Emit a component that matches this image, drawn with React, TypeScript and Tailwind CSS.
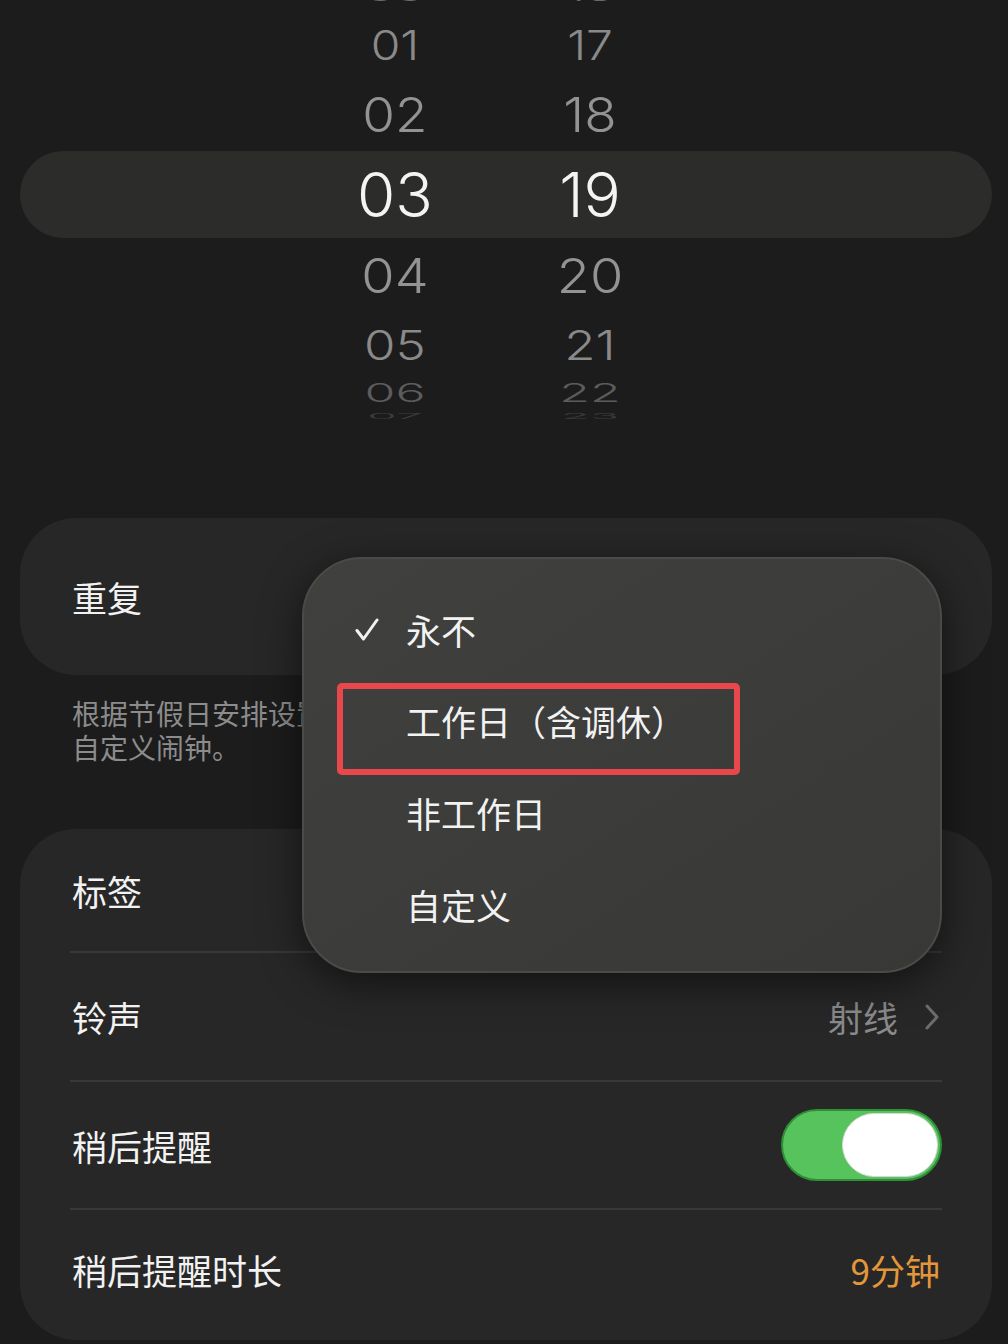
import React from "react";

const cjk = { fontFamily: '"Noto Sans CJK SC", "Noto Sans", sans-serif' };
const digitFont = { fontFamily: 'Inter, "Liberation Sans", sans-serif' };

type Row = { a: string; b: string; h: string; size: string; sy: string; color: string };

const rows: Row[] = [
  { a: "00", b: "16", h: "h-[30px]", size: "text-[48px]", sy: "scale-y-[0.35]", color: "text-[#6a6a6a]" },
  { a: "01", b: "17", h: "h-[70px]", size: "text-[48px]", sy: "scale-y-[0.86]", color: "text-[#8a8a8a]" },
  { a: "02", b: "18", h: "h-[71px]", size: "text-[53px]", sy: "scale-y-[0.91]", color: "text-[#939393]" },
];
const rowsBelow: Row[] = [
  { a: "04", b: "20", h: "h-[76px]", size: "text-[54px]", sy: "scale-y-[0.89]", color: "text-[#939393]" },
  { a: "05", b: "21", h: "h-[62px]", size: "text-[51px]", sy: "scale-y-[0.81]", color: "text-[#8a8a8a]" },
  { a: "06", b: "22", h: "h-[34px]", size: "text-[50px]", sy: "scale-y-[0.5]", color: "text-[#5c5c5c]" },
  { a: "07", b: "23", h: "h-[12px]", size: "text-[48px]", sy: "scale-y-[0.15]", color: "text-[#3c3c3c]" },
];

function PickerRow({ r }: { r: Row }) {
  return (
    <div className={`flex items-center pl-[295px] ${r.h}`}>
      <div className={`w-[200px] text-center font-light leading-none ${r.size} ${r.color} ${r.sy}`} style={digitFont}>
        {r.a}
      </div>
      <div className={`w-[190px] text-center font-light leading-none ${r.size} ${r.color} ${r.sy}`} style={digitFont}>
        {r.b}
      </div>
    </div>
  );
}

function Sep() {
  return <div className="mx-[50px] h-[2px] bg-[#383838]" />;
}

export default function App() {
  return (
    <div className="w-[1008px] h-[1344px] overflow-hidden bg-[#1c1c1c] text-[#f2f2f2]" style={cjk}>
      {/* Time picker */}
      <div className="mt-[-20px]">
        {rows.map((r) => (
          <PickerRow key={r.a} r={r} />
        ))}
        <div className="ml-[20px] mr-[16px] flex h-[87px] items-center rounded-full bg-[#2c2d2a] pl-[275px]">
          <div className="w-[200px] text-center text-[62px] font-light leading-none text-[#f4f4f4]" style={digitFont}>
            03
          </div>
          <div className="w-[190px] text-center text-[62px] font-light leading-none text-[#f4f4f4]" style={digitFont}>
            19
          </div>
        </div>
        {rowsBelow.map((r) => (
          <PickerRow key={r.a} r={r} />
        ))}
      </div>

      {/* Settings */}
      <div className="relative mt-[96px]">
        <div className="ml-[20px] mr-[16px] flex h-[157px] items-center rounded-[56px] bg-[#272727] pl-[52px]">
          <span className="text-[35px] leading-none">重复</span>
        </div>
        <div className="mt-[21px] pl-[72px] pr-[60px] text-[28px] leading-[34px] text-[#8c8c8c]">
          <p className="whitespace-nowrap">根据节假日安排设置闹钟，节假日不响铃，或选择</p>
          <p>自定义闹钟。</p>
        </div>

        <div className="ml-[20px] mr-[16px] mt-[65px] h-[511px] rounded-[56px] bg-[#272727]">
          <div className="flex h-[122px] items-center pl-[52px] pr-[50px]">
            <span className="text-[35px] leading-none">标签</span>
          </div>
          <Sep />
          <div className="flex h-[127px] items-center justify-between pl-[52px] pr-[52px]">
            <span className="text-[35px] leading-none">铃声</span>
            <div className="flex items-center gap-[26px]">
              <span className="text-[35px] leading-none text-[#8a8a8a]">射线</span>
              <svg width="16" height="26" viewBox="0 0 16 26" fill="none">
                <path d="M3 2 L13 13 L3 24" stroke="#6c6c6c" strokeWidth="3" strokeLinecap="round" strokeLinejoin="round" />
              </svg>
            </div>
          </div>
          <Sep />
          <div className="flex h-[126px] items-center justify-between pl-[52px] pr-[50px]">
            <span className="text-[35px] leading-none">稍后提醒</span>
            <div className="flex h-[72px] w-[161px] items-center justify-end rounded-full border-2 border-[#2f8f36] bg-[#56c35c] pr-[2px]">
              <div className="h-[64px] w-[96px] rounded-full border border-[#d8d8d8] bg-white" />
            </div>
          </div>
          <Sep />
          <div className="flex h-[118px] items-center justify-between pl-[52px] pr-[52px]">
            <span className="text-[35px] leading-none">稍后提醒时长</span>
            <span className="text-[35px] leading-none text-[#e3973a]">9分钟</span>
          </div>
        </div>

        {/* Dropdown menu */}
        <div className="absolute left-[302px] top-[39px] h-[416px] w-[640px] rounded-[60px] border-2 border-[#4a4a47] bg-gradient-to-br from-[#40403e] to-[#383836] pt-[25px] shadow-[0_10px_40px_rgba(0,0,0,0.55)]">
          <div className="relative flex h-[91px] items-center pl-[102px]">
            <svg className="absolute left-[51px] top-[34px]" width="24" height="24" viewBox="0 0 24 24" fill="none">
              <path d="M2 12.5 L8.5 21 L22 2" stroke="#f2f2f2" strokeWidth="3" strokeLinecap="round" strokeLinejoin="round" />
            </svg>
            <span className="text-[35px] leading-none">永不</span>
          </div>
          <div className="flex h-[91px] items-center pl-[102px]">
            <span className="text-[35px] leading-none">工作日（含调休）</span>
          </div>
          <div className="flex h-[92px] items-center pl-[102px]">
            <span className="text-[35px] leading-none">非工作日</span>
          </div>
          <div className="flex h-[92px] items-center pl-[102px]">
            <span className="text-[35px] leading-none">自定义</span>
          </div>
          <div className="absolute left-[33px] top-[124px] h-[92px] w-[403px] rounded-[5px] border-[6px] border-[#e8484b]" />
        </div>
      </div>
    </div>
  );
}
